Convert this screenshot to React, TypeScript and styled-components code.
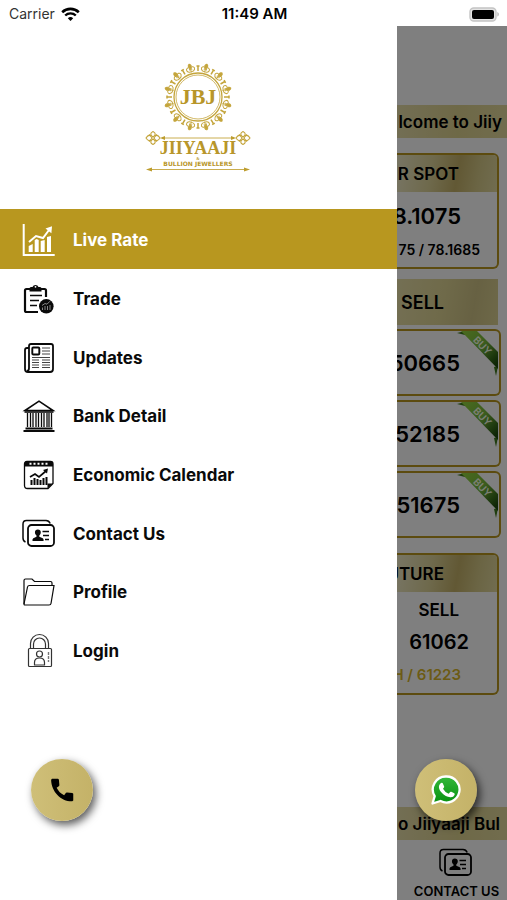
import React from "react";
import styled, { createGlobalStyle } from "styled-components";

const GOLD = "#b8971f";

const GlobalStyle = createGlobalStyle`
  *, *::before, *::after { box-sizing: border-box; }
  body {
    margin: 0;
    background: #fff;
    color: #000;
    font-family: Inter, "Liberation Sans", sans-serif;
  }
  svg { display: block; flex: none; }
`;

const Screen = styled.div`
  position: relative;
  display: flex;
  flex-direction: column;
  min-height: 100vh;
  overflow: hidden;
`;

const StatusBar = styled.header`
  display: grid;
  grid-template-columns: 1fr auto 1fr;
  align-items: center;
  height: 26px;
  padding: 2px 7px 0 9px;
  font-size: 14px;
  line-height: 20px;
`;

const Carrier = styled.span`
  display: flex;
  align-items: center;
  gap: 6px;
  color: #333;
`;

const Clock = styled.time`
  font-size: 15px;
  font-weight: 600;
`;

const BatterySlot = styled.span`
  justify-self: end;
`;

const Body = styled.div`
  display: flex;
  flex: 1;
`;

const Drawer = styled.aside`
  flex: 0 0 78.3%;
  background: #fff;
`;

const LogoArea = styled.div`
  display: flex;
  justify-content: center;
  padding: 36px 0 35px;
`;

const Menu = styled.nav`
  display: flex;
  flex-direction: column;
  min-height: 471px;
`;

const MenuItem = styled.a<{ $active?: boolean }>`
  display: flex;
  flex: ${(p) => (p.$active ? "0 0 60px" : "1")};
  align-items: center;
  gap: 18px;
  padding: 1px 23px 0;
  font-size: 17px;
  font-weight: 700;
  line-height: 24px;
  text-decoration: none;
  color: ${(p) => (p.$active ? "#fff" : "#0a0a0a")};
  background: ${(p) => (p.$active ? GOLD : "transparent")};
`;

const Pane = styled.main`
  position: relative;
  display: flex;
  flex: 1;
  min-width: 0;
  flex-direction: column;
  padding-top: 79px;
  overflow: hidden;
  white-space: nowrap;
`;

const Scrim = styled.div`
  position: absolute;
  inset: 0;
  background: rgba(0, 0, 0, 0.5);
`;

const Ticker = styled.div<{ $inset: number }>`
  display: flex;
  flex: none;
  align-items: center;
  justify-content: flex-end;
  height: 33px;
  padding-right: ${(p) => p.$inset}px;
  background: linear-gradient(90deg, #e6dda8, #ddd28f 55%, #e3d99c);
  font-size: 17px;
  font-weight: 600;
`;

const Card = styled.section`
  flex: none;
  margin: 15px 8px 0 0;
  border: 2px solid ${GOLD};
  border-left: 0;
  border-radius: 0 6px 6px 0;
  overflow: hidden;
`;

const CardTitle = styled.h2<{ $inset: number }>`
  display: flex;
  align-items: center;
  justify-content: flex-end;
  height: 37px;
  margin: 0;
  padding-right: ${(p) => p.$inset}px;
  background: linear-gradient(100deg, #f0ebc9, #ddd398 35%, #c4b169 60%, #d6ca88 80%, #e3daa0);
  font-size: 17px;
  font-weight: 600;
`;

const SpotFigures = styled.div`
  padding-bottom: 8px;
`;

const Figure = styled.p<{ $size: number; $height: number; $inset: number; $gold?: boolean }>`
  display: flex;
  align-items: center;
  justify-content: flex-end;
  height: ${(p) => p.$height}px;
  margin: 0;
  padding-right: ${(p) => p.$inset}px;
  color: ${(p) => (p.$gold ? "#d9b72a" : "#000")};
  font-size: ${(p) => p.$size}px;
  font-weight: 600;
`;

const SellHeading = styled.h2`
  display: flex;
  flex: none;
  align-items: center;
  justify-content: flex-end;
  height: 46px;
  margin: 10px 9px 4px 0;
  padding-right: 54px;
  background: linear-gradient(100deg, #e8dfa8, #dfd594 45%, #cfc386 75%, #dcd292);
  font-size: 18px;
  font-weight: 600;
`;

const RateList = styled.ul`
  display: flex;
  flex: none;
  flex-direction: column;
  gap: 4px;
  margin: 0 6px 0 0;
  padding: 0;
  list-style: none;
`;

const RateRow = styled.li`
  position: relative;
  display: flex;
  align-items: center;
  justify-content: flex-end;
  height: 67px;
  padding-right: 39px;
  border: 2px solid ${GOLD};
  border-left: 0;
  border-radius: 0 6px 6px 0;
  font-size: 22px;
  font-weight: 600;
`;

const RibbonSvg = styled.svg`
  position: absolute;
  top: 0;
  right: 0;
`;

const Spacer = styled.div`
  flex: 1;
`;

const TabLink = styled.a`
  display: flex;
  flex: none;
  flex-direction: column;
  align-items: center;
  gap: 3px;
  height: 60px;
  margin-left: 9px;
  padding-top: 7px;
  color: #000;
  font-size: 13px;
  font-weight: 600;
  line-height: 18px;
  text-decoration: none;
`;

const FloatingButton = styled.button<{ $side: "left" | "right" }>`
  position: absolute;
  bottom: 79px;
  ${(p) => (p.$side === "left" ? "left: 31px" : "right: 30px")};
  display: grid;
  place-items: center;
  width: 62px;
  height: 62px;
  padding: 0;
  border: 0;
  border-radius: 50%;
  background: linear-gradient(90deg, #cfbf78, #c4b268);
  box-shadow: 3px 4px 9px rgba(0, 0, 0, 0.65);
  cursor: pointer;
`;

const WifiIcon = () => (
  <svg width="19" height="15" viewBox="0 0 19 15" fill="none" stroke="#000" aria-hidden="true">
    <path d="M1.2 5.2a12 12 0 0 1 16.6 0" strokeWidth="2.6" />
    <path d="M4.2 8.5a7.6 7.6 0 0 1 10.6 0" strokeWidth="2.4" />
    <path d="M6.8 11.2a4 4 0 0 1 5.4 0L9.5 14z" fill="#000" stroke="none" />
  </svg>
);

const BatteryIcon = () => (
  <svg width="31" height="15" viewBox="0 0 31 15" aria-hidden="true">
    <rect x="1" y="1" width="26" height="13" rx="3.8" fill="#e4e4e4" stroke="#c4c4c4" strokeWidth="1.4" />
    <rect x="3" y="3" width="22" height="9" rx="2" fill="#000" />
    <path d="M28.3 5v4.6c2.2-.9 2.2-3.7 0-4.6z" fill="#bdbdbd" />
  </svg>
);

const RING = Array.from({ length: 12 }, (_, i) => i * 30);

const Logo = () => (
  <svg width="106" height="112" viewBox="0 0 106 112" role="img" aria-label="Jiiyaaji Bullion Jewellers">
    <g fill="none" stroke="#c4a53c">
      <circle cx="53" cy="35" r="24" strokeWidth="1.3" />
      <circle cx="53" cy="35" r="22" strokeWidth="0.8" />
      {RING.map((a) => (
        <g key={a} transform={`rotate(${a} 53 35)`}>
          <path d="M53 9V4.500M51.500 4h3" strokeWidth="1.500" />
          <g transform="rotate(15 53 35)" strokeWidth="1">
            <path d="M53 9.500V3" />
            <path d="M53 9c-4.500 0-5-3.500-3-4.500s3 1.500 1.500 2.500M53 9c4.500 0 5-3.500 3-4.500s-3 1.500-1.500 2.500" />
            <path d="M53 5c-2-1-2-3 0-4 2 1 2 3 0 4z" fill="#c4a53c" />
          </g>
        </g>
      ))}
      <path d="M17 76H89M5 107.500H101" strokeWidth="0.9" />
      {[8, 98].map((x) => (
        <g key={x} transform={`translate(${x} 76)`} strokeWidth="1.1">
          <path d="M0-1c-3-2-3-4 0-5.500 3 1.500 3 3.500 0 5.500zM0 1c-3 2-3 4 0 5.500 3-1.500 3-3.500 0-5.500z" />
          <path d="M-1 0c-2-4-4-3-6 0 2 3 4 4 6 0zM1 0c2-4 4-3 6 0-2 3-4 4-6 0z" />
          <path d="M-4-3.500l2 1.500M4-3.500l-2 1.500M-4 3.500l2-1.500M4 3.500l-2-1.500" />
        </g>
      ))}
    </g>
    <g fill="#bd9d2e">
      <path d="M15 76l5-2v4zM91 76l-5-2v4zM1 107.500l6-2v4zM105 107.500l-6-2v4z" />
    </g>
    <g fill="#b8962a" textAnchor="middle" fontWeight="700">
      <text x="53" y="42" fontFamily="Liberation Serif, serif" fontSize="22">JBJ</text>
      <text x="53" y="92" fontFamily="Liberation Serif, serif" fontSize="18">JIIYAAJI</text>
      <text x="53" y="98" fontFamily="Liberation Serif, serif" fontSize="4">&amp;</text>
      <text x="53" y="104" fontFamily="DejaVu Sans, sans-serif" fontSize="6">BULLION JEWELLERS</text>
    </g>
  </svg>
);

const Icon = ({ children }: { children: React.ReactNode }) => (
  <svg width="32" height="32" viewBox="0 0 32 32" fill="none" stroke="currentColor" overflow="visible" aria-hidden="true">
    {children}
  </svg>
);

const LiveRateIcon = () => (
  <Icon>
    <path d="M.7 0v31h31" strokeWidth="2" />
    <path d="M5.700 28v-6l4-2v8zM11.700 28V16l2-1 2 1v12zM17.700 28V17l4-1v12zM24 28V13l4-1v16z" fill="currentColor" stroke="none" />
    <path d="M6 18l7-6 7 2 6-8" strokeWidth="2" />
    <path d="M22.500 4.500L29 2.200l-.6 7z" fill="currentColor" stroke="none" />
  </Icon>
);

const TradeIcon = () => (
  <Icon>
    <path d="M7 6H3.500Q2 6 2 7.500v20Q2 29 3.500 29H15M18 6h3.500Q23 6 23 7.500V14" strokeWidth="2.200" />
    <path d="M6.500 8.500V5.500Q6.500 4 8 4h1.500a3.200 3.200 0 0 1 6 0H17q1.500 0 1.500 1.500v3z" fill="currentColor" stroke="none" />
    <circle cx="12.500" cy="3.800" r=".9" fill="#fff" stroke="none" />
    <path d="M7 12.500h12M7 17.500h9M7 22.500h7" strokeWidth="1.700" />
    <circle cx="23.300" cy="23.300" r="7.300" fill="currentColor" stroke="none" />
    <path d="M19.500 27v-2.500M22 27v-4M24.500 27v-4M27 27v-5M19 22.500l3-2 2 .7 3-3" stroke="#bbb" strokeWidth=".7" />
  </Icon>
);

const UpdatesIcon = () => (
  <Icon>
    <path d="M6 6H4Q2 6 2 8v19q0 3 3 3h22q3 0 3-3V4q0-2-2-2H8Q6 2 6 4v22q0 3-2 3" strokeWidth="1.800" />
    <rect x="9.300" y="5.500" width="7" height="7" rx="1" strokeWidth="1.900" />
    <path d="M19 6h8M19 9h8M19 12h8M9 15.500h18M9 18h7M19 18h8M9 20.500h7M19 20.500h8M9 23h7M19 23h8M9 25.500h7M19 25.500h8" strokeWidth="1" stroke="#444" />
  </Icon>
);

const BankIcon = () => (
  <Icon>
    <path d="M2 10.500L16 1.200l14 9.300z" strokeWidth="1.600" />
    <path d="M1.500 12h29" strokeWidth="1.600" />
    <path d="M4.500 13v14M7.500 13v14M10 13v14M13 13v14M15.500 13v14M18.500 13v14M21 13v14M24 13v14M26 13v14M28.500 13v14" strokeWidth="1.300" />
    <path d="M2.500 28.500h27M.5 31h31" strokeWidth="1.900" />
  </Icon>
);

const CalendarIcon = () => (
  <Icon>
    <path d="M25 29.500H4.500q-3 0-3-3V5q0-2.500 2.500-2.500h23.500Q30 2.500 30 5v19.500z" strokeWidth="1.300" />
    <path d="M1.500 7.500V5q0-3 3-3h22.500q3 0 3 3v2.500zM24.500 29.500v-5H30z" fill="currentColor" stroke="none" />
    <path d="M6.500 4.800h20" stroke="#fff" strokeWidth="2" strokeDasharray="2 2" />
    <path d="M8.500 26v-5M11.500 26v-7M14.500 26v-6M17.500 26v-5M20.500 26v-7M23.500 26v-8" strokeWidth="2" />
    <path d="M7 18l5-3 4 3 7-6" strokeWidth="1.700" />
    <path d="M20 11l5-1.500-1 5z" fill="currentColor" stroke="none" />
  </Icon>
);

const ContactIcon = () => (
  <Icon>
    <path d="M2.500 24Q0 23 0 20V6q0-3.500 3.500-3.500H23q3 0 4.200 3" strokeWidth="1.500" />
    <rect x="5" y="7" width="26" height="21" rx="3.500" strokeWidth="1.800" />
    <path d="M14.800 11.500c4 0 3.500 4.500 1.500 6v1.200l3.500 1.500q1 .8.8 2.800H9.500q-.3-2 .8-2.800l3.200-1.500v-1.200c-2-1.500-2.500-6 1.300-6z" fill="currentColor" stroke="none" />
    <path d="M19.500 13.500h6.500M20 17.500h6M22 21.500h4" strokeWidth="1.500" />
  </Icon>
);

const FolderIcon = () => (
  <Icon>
    <path d="M1 28V4.500Q1 3 2.500 3H9l2.500 2.500h16q1.500 0 1.500 1.500v3" strokeWidth="1.200" />
    <path d="M1 28L4.500 11q.3-1.500 2-1.500H31L28 27.500q-.3 1.500-2 1.500H2q-1 0-1-1z" strokeWidth="1.200" />
  </Icon>
);

const LockIcon = () => (
  <Icon>
    <g stroke="#333">
      <path d="M7.500 13.500V8.500a9 9 0 0 1 18 0v5M10.500 13.500V9a6 6 0 0 1 12 0v4.500" strokeWidth="1.200" />
      <rect x="5.500" y="13.500" width="23" height="18" rx="1" strokeWidth="1.200" />
      <circle cx="16.500" cy="19" r="3" strokeWidth="1.200" />
      <path d="M11.500 30v-2.500q0-4.500 5-4.500t5 4.500V30z" strokeWidth="1.200" />
      <path d="M25.500 17v10" strokeWidth="1.400" strokeDasharray="3 1" stroke="#777" />
    </g>
  </Icon>
);

const Ribbon = ({ id }: { id: string }) => (
  <RibbonSvg width="42" height="46" viewBox="0 0 42 46" aria-label="Buy">
    <defs>
      <linearGradient id={id} x1="0" y1="0" x2="1" y2="1">
        <stop offset="0" stopColor="#96d83f" />
        <stop offset="0.5" stopColor="#74b53c" />
        <stop offset="0.9" stopColor="#1d4d0c" />
      </linearGradient>
    </defs>
    <path d="M0 2L8 0v4zM37 36l4-1-2 10z" fill="#3f7a1c" />
    <path d="M4 0h16l21 21v17z" fill={`url(#${id})`} />
    <text x="25" y="18" transform="rotate(46 25 15)" textAnchor="middle" fontSize="10" fontWeight="600" fill="#f6ffe9">BUY</text>
  </RibbonSvg>
);

const PhoneIcon = () => (
  <svg width="30" height="30" viewBox="0 0 24 24" aria-hidden="true">
    <path d="M4 3h4.800l.7.6.4 4.400-.2.800-2 1.300c1.400 2.700 3.200 4.700 6 6l1.500-1.900.8-.3 4.300.4.700.7V20.300l-.8.700C11.500 21.300 3.500 13.500 3.300 3.700z" fill="#000" />
  </svg>
);

const WhatsAppIcon = () => (
  <svg width="30" height="30" viewBox="0 0 30 30" aria-hidden="true">
    <defs>
      <linearGradient id="waGreen" x1="0" y1="0" x2="0" y2="1">
        <stop offset="0" stopColor="#35b83c" />
        <stop offset="1" stopColor="#07900e" />
      </linearGradient>
    </defs>
    <path d="M15.500 1.500a13 13 0 1 1-6 24.500L1.500 28.500l2.200-7.300A13 13 0 0 1 15.500 1.500z" fill="url(#waGreen)" stroke="#fff" strokeWidth="2.300" strokeLinejoin="round" />
    <path d="M9.400 8.500q1-1.200 2.200-.5l1.600 3.500q.2.700-1.200 2.200 2 3.600 5.600 5l1.600-1.800q.5-.4 1.100-.1l3 1.500q.7.500.2 1.800-1.200 2.500-4.200 2.200C13 21.500 8 16 7.900 12q0-2.200 1.500-3.500z" fill="#fff" />
  </svg>
);

const menu = [
  { label: "Live Rate", icon: <LiveRateIcon />, active: true },
  { label: "Trade", icon: <TradeIcon /> },
  { label: "Updates", icon: <UpdatesIcon /> },
  { label: "Bank Detail", icon: <BankIcon /> },
  { label: "Economic Calendar", icon: <CalendarIcon /> },
  { label: "Contact Us", icon: <ContactIcon /> },
  { label: "Profile", icon: <FolderIcon /> },
  { label: "Login", icon: <LockIcon /> },
];

const rates = ["50665", "52185", "51675"];

export default function App() {
  return (
    <>
      <GlobalStyle />
      <Screen>
        <StatusBar>
          <Carrier>Carrier <WifiIcon /></Carrier>
          <Clock>11:49 AM</Clock>
          <BatterySlot><BatteryIcon /></BatterySlot>
        </StatusBar>
        <Body>
          <Drawer>
            <LogoArea><Logo /></LogoArea>
            <Menu aria-label="Main menu">
              {menu.map((m) => (
                <MenuItem key={m.label} href="#" $active={m.active} aria-current={m.active ? "page" : undefined}>
                  {m.icon}
                  {m.label}
                </MenuItem>
              ))}
            </Menu>
          </Drawer>
          <Pane>
            <Ticker $inset={5}>lcome to Jiiy</Ticker>
            <Card>
              <CardTitle $inset={38}>R SPOT</CardTitle>
              <SpotFigures>
                <Figure $size={22} $height={47} $inset={36}>8.1075</Figure>
                <Figure $size={14} $height={20} $inset={17}>75 / 78.1685</Figure>
              </SpotFigures>
            </Card>
            <SellHeading>SELL</SellHeading>
            <RateList>
              {rates.map((r, i) => (
                <RateRow key={r}>
                  {r}
                  <Ribbon id={`ribbon${i}`} />
                </RateRow>
              ))}
            </RateList>
            <Card>
              <CardTitle $inset={53}>UTURE</CardTitle>
              <Figure $size={17} $height={36} $inset={38}>SELL</Figure>
              <Figure $size={20} $height={27} $inset={28}>61062</Figure>
              <Figure $size={15} $height={38} $inset={36} $gold>H / 61223</Figure>
            </Card>
            <Spacer />
            <Ticker $inset={7}>o Jiiyaaji Bul</Ticker>
            <TabLink href="#">
              <ContactIcon />
              CONTACT US
            </TabLink>
            <Scrim />
          </Pane>
        </Body>
        <FloatingButton $side="left" aria-label="Call"><PhoneIcon /></FloatingButton>
        <FloatingButton $side="right" aria-label="WhatsApp"><WhatsAppIcon /></FloatingButton>
      </Screen>
    </>
  );
}
